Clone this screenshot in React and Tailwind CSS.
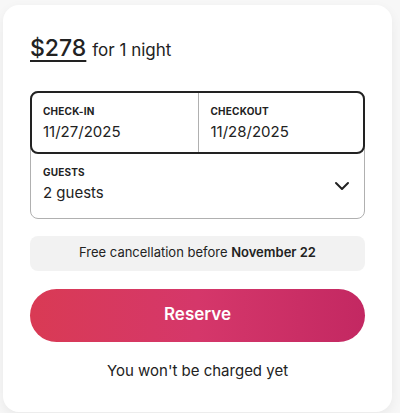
import React from "react";

const ChevronDown = () => (
  <svg width="16" height="16" viewBox="0 0 32 32" fill="none" stroke="#222" strokeWidth="4" strokeLinecap="round" strokeLinejoin="round">
    <path d="M28 12 16 24 4 12" />
  </svg>
);

const App = () => {
  return (
    <div className="min-h-[413px] bg-[#f7f7f7] pl-[3px] pr-[8px] pt-[5px] pb-[5px] font-['Inter',sans-serif] text-[#222]">
      <div className="bg-white rounded-[16px] shadow-[0_4px_12px_rgba(0,0,0,0.06)] px-[27px] pt-[26px] pb-[30px]">
        {/* Price */}
        <div className="flex items-baseline gap-[6px]">
          <span className="text-[23px] font-medium underline underline-offset-[4px] decoration-[1.5px]">$278</span>
          <span className="text-[17px]">for 1 night</span>
        </div>

        {/* Dates + guests */}
        <div className="mt-[25px] rounded-[8px] border border-[#b0b0b0]">
          <div className="-m-px grid grid-cols-2 rounded-[8px] border-2 border-[#222]">
            <div className="px-[11px] pt-[11px] pb-[9px]">
              <div className="text-[10px] font-bold tracking-[0.2px]">CHECK-IN</div>
              <div className="text-[15px] mt-[2px]">11/27/2025</div>
            </div>
            <div className="px-[12px] pt-[11px] pb-[9px] border-l border-[#b0b0b0]">
              <div className="text-[10px] font-bold tracking-[0.2px]">CHECKOUT</div>
              <div className="text-[15px] mt-[2px]">11/28/2025</div>
            </div>
          </div>
          <div className="flex items-center justify-between pl-[12px] pr-[14px] pt-[12px] pb-[13px]">
            <div>
              <div className="text-[10px] font-bold tracking-[0.2px]">GUESTS</div>
              <div className="text-[15px] mt-[2px]">2 guests</div>
            </div>
            <ChevronDown />
          </div>
        </div>

        {/* Cancellation */}
        <div className="mt-[17px] rounded-[8px] bg-[#f2f2f2] h-[35px] flex items-center justify-center text-[13px] text-[#222]">
          Free cancellation before&nbsp;<span className="font-semibold">November 22</span>
        </div>

        {/* Reserve */}
        <button className="mt-[18px] w-full h-[53px] rounded-full bg-gradient-to-r from-[#d93a54] via-[#d5376a] to-[#c32862] text-white text-[17px] font-semibold">
          Reserve
        </button>

        <div className="mt-[18px] text-center text-[15px]">You won't be charged yet</div>
      </div>
    </div>
  );
};

export default App;
